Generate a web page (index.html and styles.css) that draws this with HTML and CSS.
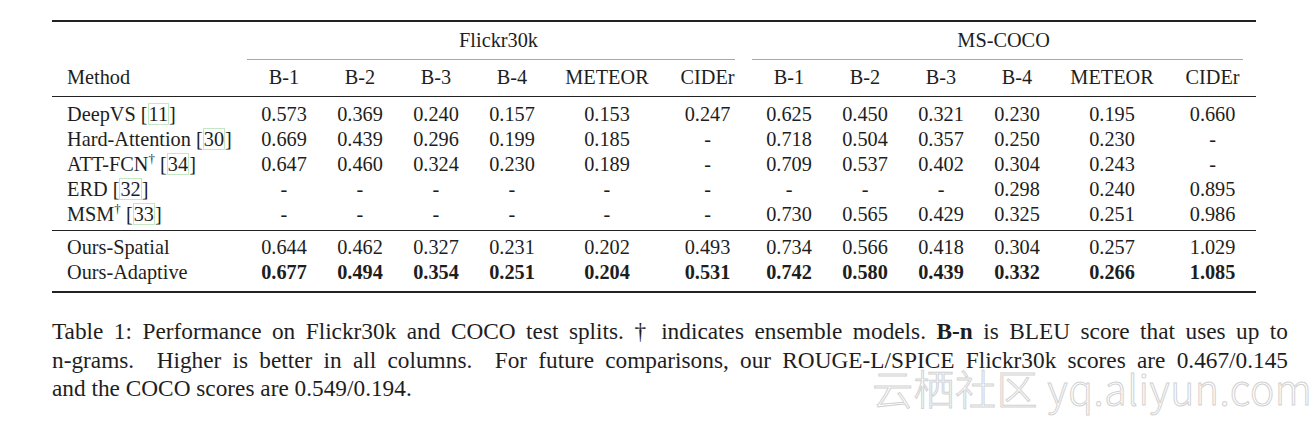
FILE: index.html
```html
<!DOCTYPE html>
<html lang="en">
<head>
<meta charset="utf-8">
<title>Table 1</title>
<link rel="stylesheet" href="styles.css">
</head>
<body>
<div class="page">
  <table class="results">
    <colgroup>
      <col class="c-method">
      <col class="c-b"><col class="c-b"><col class="c-b"><col class="c-b">
      <col class="c-meteor"><col class="c-cider">
      <col class="c-b"><col class="c-b"><col class="c-b"><col class="c-b">
      <col class="c-meteor"><col class="c-cider">
    </colgroup>
    <thead>
      <tr class="group-row">
        <th></th>
        <th colspan="6"><div class="group-label">Flickr30k</div><div class="cmid cmid-left"></div></th>
        <th colspan="6"><div class="group-label">MS-COCO</div><div class="cmid cmid-right"></div></th>
      </tr>
      <tr class="head-row">
        <th class="method">Method</th>
        <th>B-1</th><th>B-2</th><th>B-3</th><th>B-4</th><th>METEOR</th><th>CIDEr</th>
        <th>B-1</th><th>B-2</th><th>B-3</th><th>B-4</th><th>METEOR</th><th>CIDEr</th>
      </tr>
    </thead>
    <tbody class="baselines">
      <tr class="first">
        <td class="method">DeepVS [<span class="cite">11</span>]</td>
        <td>0.573</td><td>0.369</td><td>0.240</td><td>0.157</td><td>0.153</td><td>0.247</td>
        <td>0.625</td><td>0.450</td><td>0.321</td><td>0.230</td><td>0.195</td><td>0.660</td>
      </tr>
      <tr>
        <td class="method">Hard-Attention [<span class="cite">30</span>]</td>
        <td>0.669</td><td>0.439</td><td>0.296</td><td>0.199</td><td>0.185</td><td>-</td>
        <td>0.718</td><td>0.504</td><td>0.357</td><td>0.250</td><td>0.230</td><td>-</td>
      </tr>
      <tr>
        <td class="method">ATT-FCN<sup class="dag">†</sup> [<span class="cite">34</span>]</td>
        <td>0.647</td><td>0.460</td><td>0.324</td><td>0.230</td><td>0.189</td><td>-</td>
        <td>0.709</td><td>0.537</td><td>0.402</td><td>0.304</td><td>0.243</td><td>-</td>
      </tr>
      <tr>
        <td class="method">ERD [<span class="cite">32</span>]</td>
        <td>-</td><td>-</td><td>-</td><td>-</td><td>-</td><td>-</td>
        <td>-</td><td>-</td><td>-</td><td>0.298</td><td>0.240</td><td>0.895</td>
      </tr>
      <tr class="last">
        <td class="method">MSM<sup class="dag">†</sup> [<span class="cite">33</span>]</td>
        <td>-</td><td>-</td><td>-</td><td>-</td><td>-</td><td>-</td>
        <td>0.730</td><td>0.565</td><td>0.429</td><td>0.325</td><td>0.251</td><td>0.986</td>
      </tr>
    </tbody>
    <tbody class="ours">
      <tr class="first">
        <td class="method">Ours-Spatial</td>
        <td>0.644</td><td>0.462</td><td>0.327</td><td>0.231</td><td>0.202</td><td>0.493</td>
        <td>0.734</td><td>0.566</td><td>0.418</td><td>0.304</td><td>0.257</td><td>1.029</td>
      </tr>
      <tr class="last best">
        <td class="method">Ours-Adaptive</td>
        <td>0.677</td><td>0.494</td><td>0.354</td><td>0.251</td><td>0.204</td><td>0.531</td>
        <td>0.742</td><td>0.580</td><td>0.439</td><td>0.332</td><td>0.266</td><td>1.085</td>
      </tr>
    </tbody>
  </table>

  <div class="caption">
    <span class="line">Table 1: Performance on Flickr30k and COCO test splits. † indicates ensemble models. <b>B-n</b> is BLEU score that uses up to</span>
    <span class="line">n-grams.&nbsp; Higher is better in all columns.&nbsp; For future comparisons, our ROUGE-L/SPICE Flickr30k scores are 0.467/0.145</span>
    <span class="line last">and the COCO scores are 0.549/0.194.</span>
  </div>

  <div class="watermark">云栖社区 yq.aliyun.com</div>
</div>
</body>
</html>
```

FILE: styles.css
```css
html, body {
  margin: 0;
  padding: 0;
  background: #ffffff;
}

.page {
  position: relative;
  width: 1316px;
  height: 424px;
  padding: 20px 0 0 52px;
  box-sizing: border-box;
  font-family: "Liberation Serif", "Times New Roman", serif;
  color: #1e1e1e;
}

.results {
  width: 1204px;
  table-layout: fixed;
  border-collapse: collapse;
  border-top: 2px solid #222;
  border-bottom: 2px solid #222;
  font-size: 20.3px;
}

.c-method { width: 194px; }
.c-b { width: 76px; }
.c-meteor { width: 114px; }
.c-cider { width: 87px; }

.results th,
.results td {
  padding: 0;
  line-height: 25px;
  font-weight: normal;
  text-align: center;
  white-space: nowrap;
  vertical-align: top;
}

.results .method {
  text-align: left;
  padding-left: 15px;
}

.group-row th {
  padding-top: 6px;
}

.group-label {
  line-height: 25px;
}

.cmid {
  height: 0;
  border-top: 1px solid #a8a8a8;
  margin-top: 6px;
}

.cmid-left { margin-left: 1px; margin-right: 16px; }
.cmid-right { margin-left: 1px; margin-right: 13px; }

.head-row th {
  padding-top: 5px;
  padding-bottom: 6px;
  border-bottom: 1.5px solid #222;
}

.baselines tr.first td { padding-top: 5px; }
.baselines tr.last td {
  padding-bottom: 3px;
  border-bottom: 1px solid #222;
}

.ours tr.first td { padding-top: 4px; }
.ours tr.last td { padding-bottom: 6px; }

.best td:not(.method) {
  font-weight: bold;
}

.cite {
  outline: 1px solid #c4e8c4;
  outline-offset: -1px;
  padding: 0 1px;
}

.dag {
  font-size: 13px;
  line-height: 0;
  vertical-align: 8px;
}

.caption {
  width: 1236px;
  margin-top: 24px;
  font-size: 23.3px;
  line-height: 28.7px;
}

.caption .line {
  display: block;
  text-align: justify;
  text-align-last: justify;
  white-space: nowrap;
}

.caption .line.last {
  text-align-last: left;
}

.watermark {
  position: absolute;
  left: 872px;
  top: 362px;
  font-family: "Noto Sans CJK SC", "Noto Sans", sans-serif;
  font-weight: 300;
  font-size: 41px;
  line-height: 50px;
  letter-spacing: 0.5px;
  color: #ffffff;
  -webkit-text-stroke: 1px #d2d2d2;
  white-space: nowrap;
}
```
